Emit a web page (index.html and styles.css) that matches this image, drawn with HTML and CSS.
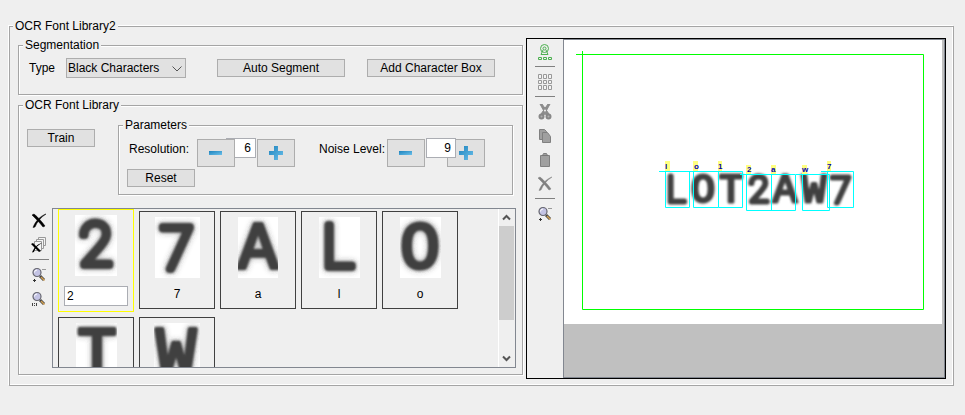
FILE: index.html
```html
<!DOCTYPE html>
<html lang="en">
<head>
<meta charset="utf-8">
<title>OCR Font Library2</title>
<link rel="stylesheet" href="styles.css">
</head>
<body>
<svg class="defs" width="0" height="0" aria-hidden="true">
  <defs>
    <filter id="scan" x="-30%" y="-30%" width="160%" height="160%">
      <feGaussianBlur in="SourceGraphic" stdDeviation="1" result="ink"/>
      <feGaussianBlur in="SourceGraphic" stdDeviation="3" result="smear"/>
      <feComponentTransfer in="smear" result="halo"><feFuncA type="linear" slope="0.5"/></feComponentTransfer>
      <feMerge><feMergeNode in="halo"/><feMergeNode in="ink"/></feMerge>
    </filter>
    <filter id="soft" x="-10%" y="-30%" width="120%" height="160%"><feGaussianBlur stdDeviation="0.8"/></filter>
    <linearGradient id="blue" x1="0" y1="0" x2="1" y2="1"><stop offset="0" stop-color="#1d83bd"/><stop offset="1" stop-color="#6cc0ea"/></linearGradient>
    <symbol id="minus" viewBox="0 0 14 14"><path d="M0 5h13v4H0z" fill="url(#blue)"/></symbol>
    <symbol id="plus" viewBox="0 0 14 14"><path d="M5 0h4v5h5v4H9v5H5V9H0V5h5z" fill="url(#blue)"/></symbol>
    <symbol id="cross" viewBox="0 0 16 16"><path d="M1 2L3 1C7 4 11 9 14 13L12 14C9 10 5 6 1 2zM15 1C10 4 6 9 4 14L2 14.500C4 9 9 3 15 1z" fill="currentColor" stroke="currentColor" stroke-width=".5"/></symbol>
    <symbol id="lens" viewBox="0 0 16 16"><path d="M9 9l4 4" stroke="#444" stroke-width="3"/><path d="M10 10l3.500 3.500" stroke="#d2a052" stroke-width="1.500"/><circle cx="6" cy="5.500" r="4" fill="#c3c3e4" stroke="#66666f" stroke-width="1.200"/><path d="M3.500 5.500a2.500 2.500 0 0 1 2.500-2.500" stroke="#fff" fill="none"/></symbol>
  </defs>
</svg>
<fieldset class="group outer">
  <legend>OCR Font Library2</legend>
  <div class="columns">
    <div class="controls">
      <fieldset class="group">
        <legend>Segmentation</legend>
        <div class="segment-row">
          <label for="type">Type</label>
          <span class="combo">
            <select id="type"><option>Black Characters</option><option>White Characters</option></select>
            <svg width="10" height="6" viewBox="0 0 10 6" aria-hidden="true"><path d="M.5.5L5 5 9.500.5" fill="none" stroke="#555"/></svg>
          </span>
          <button class="wide auto">Auto Segment</button>
          <button class="wide add">Add Character Box</button>
        </div>
      </fieldset>
      <fieldset class="group library">
        <legend>OCR Font Library</legend>
        <div class="train-row">
          <button class="train">Train</button>
          <fieldset class="group params">
            <legend>Parameters</legend>
            <div class="spinners">
              <label for="res">Resolution:</label>
              <div class="spinner left-over">
                <button class="step minus" aria-label="Decrease resolution"><svg width="14" height="14"><use href="#minus"/></svg></button>
                <input id="res" type="text" value="6">
                <button class="step plus" aria-label="Increase resolution"><svg width="14" height="14"><use href="#plus"/></svg></button>
              </div>
              <label for="noise">Noise Level:</label>
              <div class="spinner right-over">
                <button class="step minus" aria-label="Decrease noise level"><svg width="14" height="14"><use href="#minus"/></svg></button>
                <input id="noise" type="text" value="9">
                <button class="step plus" aria-label="Increase noise level"><svg width="14" height="14"><use href="#plus"/></svg></button>
              </div>
            </div>
            <button class="reset">Reset</button>
          </fieldset>
        </div>
        <div class="list-row">
          <div class="tools">
            <button aria-label="Delete"><svg class="black" width="16" height="16"><use href="#cross"/></svg></button>
            <button aria-label="Delete all"><svg width="16" height="16" viewBox="0 0 16 16"><g fill="#f4f4f4" stroke="#999"><path d="M7.500.5h7v8h-7z"/><path d="M5.500 2.500h7v9h-7z"/><path d="M3.500 4.500h7v9h-7z"/></g><path d="M0 7l2-1 8 8-2 1zM11 6C7 8 4 11 3 15l-2 .5C3 11 6 7 11 6z" fill="#000"/></svg></button>
            <i></i>
            <button aria-label="Zoom"><svg width="16" height="16" viewBox="0 0 16 16"><use href="#lens" width="16" height="16"/><path d="M11 2.500h4" stroke="#999"/><path d="M2 13.500h3M3.500 12v3" stroke="#333"/></svg></button>
            <button aria-label="Actual size"><svg width="16" height="16" viewBox="0 0 16 16"><use href="#lens" width="16" height="16"/><path d="M1.500 12v3M5.500 12v3M3.500 12v1M3.500 14v1" stroke="#444"/></svg></button>
          </div>
          <div class="list">
            <div class="tiles">
              <div class="tile selected"><svg width="42" height="61"><rect width="42" height="61"/><text x="21" y="50">2</text></svg><input type="text" value="2" aria-label="Character"></div>
              <div class="tile"><svg width="45" height="61"><rect width="45" height="61"/><text x="22" y="52">7</text></svg><span>7</span></div>
              <div class="tile"><svg width="40" height="61"><rect width="40" height="61"/><text class="mono" x="20" y="51">A</text></svg><span>a</span></div>
              <div class="tile"><svg width="41" height="61"><rect width="41" height="61"/><text x="19" y="50">L</text></svg><span>l</span></div>
              <div class="tile"><svg width="41" height="61"><rect width="41" height="61"/><text class="mono" x="20" y="51">O</text></svg><span>o</span></div>
              <div class="tile"><svg width="41" height="61"><rect width="41" height="61"/><text class="mono" x="21" y="50">T</text></svg><span>t</span></div>
              <div class="tile"><svg width="46" height="61"><rect width="46" height="61"/><text class="mono" x="22" y="50">W</text></svg><span>w</span></div>
            </div>
            <div class="scroll">
              <button aria-label="Scroll up"><svg width="9" height="7" viewBox="0 0 9 7"><path d="M1 5.500L4.500 2 8 5.500" fill="none" stroke="#555" stroke-width="2"/></svg></button>
              <div class="track"><div class="thumb"></div></div>
              <button aria-label="Scroll down"><svg width="9" height="7" viewBox="0 0 9 7"><path d="M1 1.500L4.500 5 8 1.500" fill="none" stroke="#555" stroke-width="2"/></svg></button>
            </div>
          </div>
        </div>
      </fieldset>
    </div>
    <div class="viewer">
      <div class="tools">
        <button aria-label="Region setup"><svg width="16" height="16" viewBox="0 0 16 16"><g fill="none" stroke="#4cb050"><circle cx="7.500" cy="4.500" r="4"/><circle cx="7.500" cy="4.500" r="1.500"/><path d="M6 6l-2 4.500h7L9 6M1.500 13.500h3v2h-3zM6.500 13.500h3v2h-3zM11.500 13.500h3v2h-3z"/></g></svg></button>
        <i></i>
        <button aria-label="Grid"><svg width="16" height="16" viewBox="0 0 16 16"><path d="M1.500.5h3v4h-3zM6.500.5h3v4h-3zM11.500.5h3v4h-3zM1.500 6.500h3v3h-3zM6.500 6.500h3v3h-3zM11.500 6.500h3v3h-3zM1.500 11.500h3v4h-3zM6.500 11.500h3v4h-3zM11.500 11.500h3v4h-3z" fill="#f4f4f4" stroke="#999"/></svg></button>
        <i></i>
        <button aria-label="Cut"><svg width="16" height="16" viewBox="0 0 16 16"><path d="M3 0l2 0 7 10-3 1zM13 0l-2 0-7 10 3 1z" fill="#8c8c8c" stroke="#8c8c8c"/><g fill="#b0b0b0" stroke="#888" stroke-width="2"><circle cx="4.500" cy="12.500" r="2"/><circle cx="11.500" cy="12.500" r="2"/></g></svg></button>
        <button aria-label="Copy"><svg width="16" height="16" viewBox="0 0 16 16"><g fill="#a0a0a0" stroke="#808080"><path d="M2.500 1.500h5l2 2v8h-7z"/><path d="M5.500 4.500h5l3 4v6h-8z"/></g></svg></button>
        <button aria-label="Paste"><svg width="16" height="16" viewBox="0 0 16 16"><path d="M3.500 3.500h2l1-2h3l1 2h2v11h-9z" fill="#a0a0a0" stroke="#808080"/><path d="M5 3.500h6" stroke="#777"/></svg></button>
        <button aria-label="Delete box"><svg class="gray" width="16" height="16"><use href="#cross"/></svg></button>
        <i></i>
        <button aria-label="Zoom image"><svg width="16" height="16" viewBox="0 0 16 16"><use href="#lens" width="16" height="16"/><path d="M11 2.500h4" stroke="#999"/><path d="M2 13.500h3M3.500 12v3" stroke="#333"/></svg></button>
      </div>
      <div class="canvas">
        <svg width="378" height="284" viewBox="564 40 378 284">
          <rect x="564" y="40" width="378" height="284" fill="#fff"/>
          <path d="M582.500 51V309.500H923.500V54.500H576" fill="none" stroke="#0f0"/>
          <g class="scan">
            <text x="676" y="202">L</text><text class="mono" x="703" y="202">O</text><text class="mono" x="731" y="202">T</text>
            <text x="759" y="202">2</text><text class="mono" x="785" y="202">A</text><text class="mono" x="814" y="202">W</text><text x="841" y="203">7</text>
          </g>
          <path fill="#ffff80" d="M665 161h5v10h-5zM693 161h5v10h-5zM718 161h4v10h-4zM746 165h5v9h-5zM771 165h5v9h-5zM802 165h5v9h-5zM827 161h4v10h-4z"/>
          <path d="M659 171.500H742.500V207.500H718.500V171.500M665.500 171.500V207.500H689.500V171.500M693.500 171.500V207.500H718.500M740 174.500H795.500V210.500H746.500V174.500M771.500 174.500V210.500M796 174.500H829.500V210.500H802.500V174.500M821 171.500H853.500V207.500H827.500V171.500" fill="none" stroke="#0ff"/>
          <g class="marks">
            <text x="665" y="169">l</text><text x="694" y="169">o</text><text x="718" y="169">1</text><text x="747" y="172">2</text><text x="771" y="172">a</text><text x="802" y="172">w</text><text x="827" y="169">7</text>
          </g>
        </svg>
      </div>
    </div>
  </div>
</fieldset>
</body>
</html>
```
FILE: styles.css
```css
* { box-sizing: border-box; }
body {
  margin: 0;
  padding: 19px 11px 0 9px;
  background: #efefef;
  color: #000;
  font: 12px/15px "Liberation Sans", Arial, sans-serif;
}
.defs { position: absolute; }
svg { display: block; }
button, input, select { font: inherit; color: inherit; margin: 0; padding: 0; border-radius: 0; }
button { background: #e1e1e1; border: 1px solid #adadad; height: 18px; line-height: 16px; }
input { background: #fff; border: 1px solid #abadb3; height: 20px; }

.group {
  margin: 0;
  padding: 0;
  min-width: 0;
  border: 1px solid #a5a5a5;
  box-shadow: 1px 1px 0 #fff, inset 1px 1px 0 #fff;
}
.group > legend { margin-left: 4px; padding: 0 2px; height: 15px; background: #efefef; }
.outer { padding: 4px 7px 6px 8px; box-shadow: -1px -1px 0 #fff, inset -1px -1px 0 #fff; }
.outer > legend { margin-left: -5px; }

.columns { display: flex; gap: 3px; }
.controls { flex: 0 0 505px; display: flex; flex-direction: column; gap: 3px; padding-bottom: 4px; }
.segment-row { display: flex; align-items: center; padding: 5px 10px 16px; }
.segment-row label { width: 37px; }
.combo { position: relative; width: 120px; }
.combo select {
  display: block;
  appearance: none;
  width: 100%;
  height: 20px;
  padding-left: 1px;
  background: #e1e1e1;
  border: 1px solid #adadad;
}
.combo svg { position: absolute; right: 4px; top: 8px; pointer-events: none; }
.wide { width: 128px; }
.auto { margin-left: 31px; }
.add { margin-left: 22px; }

.library { padding-bottom: 6px; }
.train-row { display: flex; align-items: flex-start; gap: 23px; padding: 5px 9px 0 8px; }
.train { width: 68px; margin-top: 11px; }
.params { flex: 1; padding-bottom: 7px; }
.spinners { display: flex; align-items: flex-start; padding: 5px 0 0 10px; }
.spinners label { width: 68px; padding-top: 4px; white-space: nowrap; }
.spinner { display: flex; align-items: flex-start; margin-right: 24px; }
.spinner input { width: 30px; padding-right: 4px; text-align: right; position: relative; }
.step { width: 38px; height: 28px; margin-top: 1px; display: flex; align-items: center; justify-content: center; position: relative; }
.left-over input { margin: 0 1px 0 -9px; }
.left-over .minus { z-index: 1; }
.right-over input { margin: 0 -9px 0 1px; z-index: 1; }
.reset { display: block; width: 68px; margin: 2px 0 0 8px; }

.list-row { display: flex; padding: 13px 6px 0 0; }
.tools { display: flex; flex-direction: column; align-items: center; gap: 8px; padding-top: 5px; }
.tools button { width: 16px; height: 16px; border: 0; background: none; }
.tools i { width: 20px; height: 1px; margin: -2px 0 -1px; background: #808080; }
.list-row .tools { width: 33px; padding-left: 7px; }
.black { color: #000; }
.gray { color: #808080; }

.list { flex: 1; display: flex; height: 160px; border: 1px solid #828790; overflow: hidden; }
.tiles {
  flex: 1;
  display: flex;
  flex-wrap: wrap;
  align-items: flex-start;
  align-content: flex-start;
  gap: 3px 5px;
  padding-left: 5px;
  overflow: hidden;
}
.tile {
  display: flex;
  flex-direction: column;
  align-items: center;
  width: 76px;
  height: 98px;
  margin-top: 2px;
  padding-top: 5px;
  border: 1px solid #404040;
}
.tile span { margin-top: 9px; }
.tile input { width: 64px; margin-top: 10px; padding-left: 2px; }
.selected { height: 103px; margin-top: 0; border-color: #ff0; }
.tile rect { fill: #fff; }
.tile text, .scan text {
  font-family: Roboto, sans-serif;
  font-size: 60px;
  font-weight: 100;
  text-anchor: middle;
  fill: #404040;
  stroke: #404040;
  stroke-width: 8px;
  stroke-linejoin: round;
}
.tile text { filter: url(#scan); }
.tile .mono { font-family: "Liberation Mono", monospace; font-size: 66px; stroke-width: 4px; }
.scan { filter: url(#soft); }
.scan text { font-size: 37px; stroke-width: 5px; }
.scan .mono { font-family: "Liberation Mono", monospace; font-size: 40px; stroke-width: 3px; }
.marks text { font: bold 8px "Liberation Sans", sans-serif; fill: #0000b0; }

.scroll { width: 17px; display: flex; flex-direction: column; border-left: 1px solid #fff; padding-right: 1px; }
.scroll button { height: 17px; border: 0; background: none; display: flex; align-items: center; justify-content: center; }
.track { flex: 1; }
.thumb { height: 76%; background: #cdcdcd; }

.viewer { flex: 1; display: flex; border: 1px solid #000; }
.viewer .tools { width: 36px; }
.canvas { flex: 1; min-width: 0; overflow: hidden; background: #c0c0c0; border: 1px solid #828790; }
```
